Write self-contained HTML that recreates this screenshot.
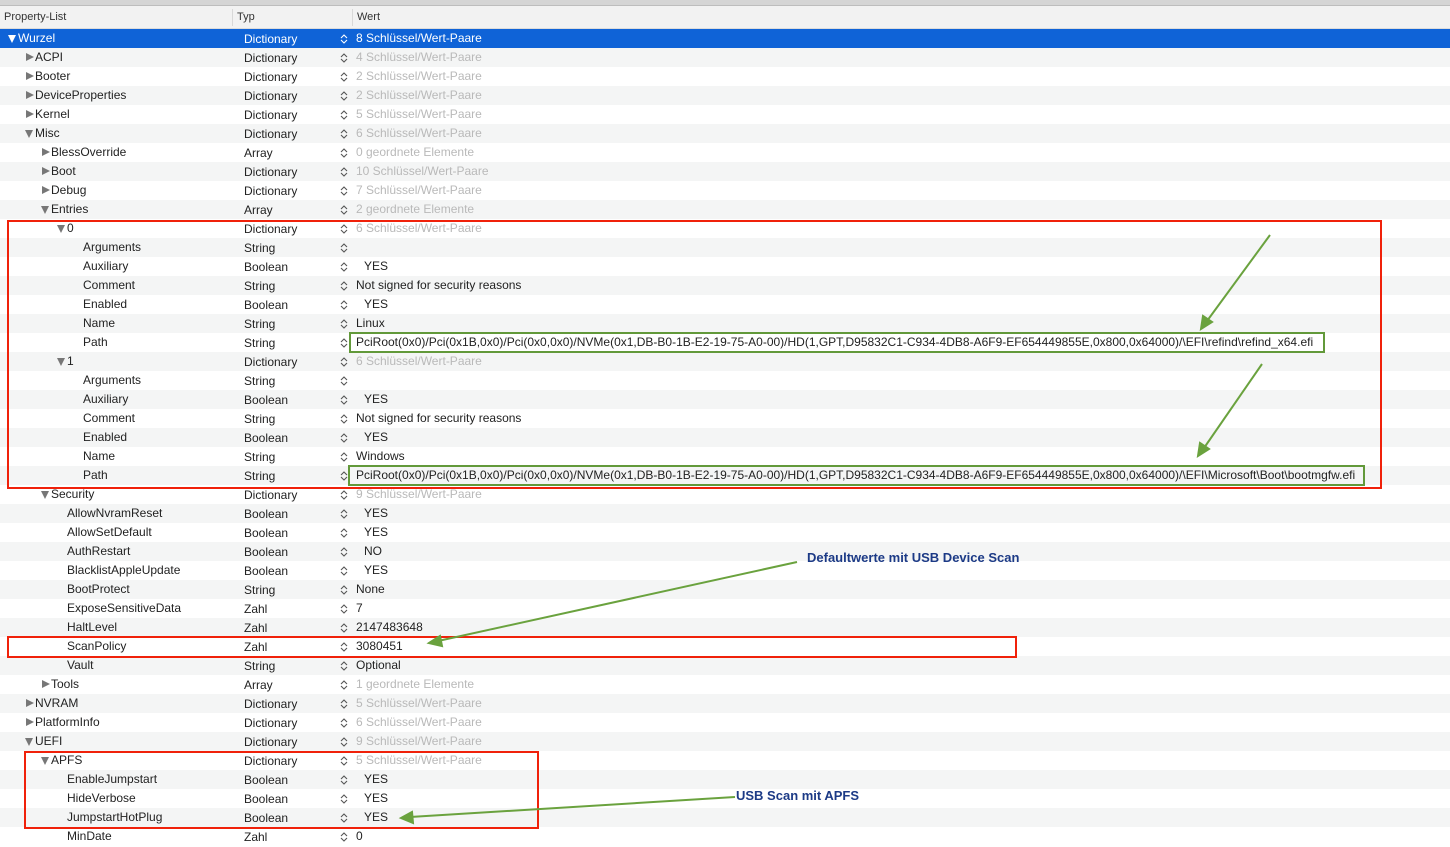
<!DOCTYPE html>
<html><head><meta charset="utf-8"><style>
*{margin:0;padding:0;box-sizing:border-box}
body{width:1450px;height:847px;overflow:hidden;background:#fff;font-family:"Liberation Sans",Arial,sans-serif;font-size:12px;color:#222;position:relative}
#top{position:absolute;left:0;top:0;width:1450px;height:6px;background:#d5d5d5;border-bottom:1px solid #bdbdbd}
#hdr{position:absolute;left:0;top:6px;width:1450px;height:23px;background:#f2f2f2;border-bottom:1px solid #dcdcdc;font-size:11px;color:#333}
#hdr span{position:absolute;top:5px}
#hdr i{position:absolute;top:3px;width:1px;height:17px;background:#d8d8d8}
#rows{position:absolute;left:0;top:29px;width:1450px}
.r{position:relative;height:19px;line-height:19px;white-space:nowrap}
.r:nth-child(even){background:#f4f5f5}
.r.sel{background:#0f63d7;color:#fff}
.n{position:absolute;top:0}
.t{position:absolute;left:244px;top:1px}
.s{position:absolute;left:340px;top:5px;width:8px;height:10px}
.v{position:absolute;left:356px;top:0}
.g{color:#b9b9b9}
.y{left:364px}
.tri{display:inline-block;width:10px;height:10px;position:relative;vertical-align:middle;top:-1px}
.tri.d::before{content:"";position:absolute;left:0;top:2px;border-left:4.5px solid transparent;border-right:4.5px solid transparent;border-top:8px solid #777}
.tri.rt::before{content:"";position:absolute;left:1px;top:1px;border-top:4.5px solid transparent;border-bottom:4.5px solid transparent;border-left:8px solid #777}
.sel .tri.d::before{border-top-color:#fff}
.box{position:absolute;border:2px solid #f0210a}
.gb{position:absolute;border:2px solid #62993a}
.lbl{position:absolute;color:#1c3a86;font-weight:bold;font-size:13px}
</style></head><body>
<div id="top"></div>
<div id="hdr"><span style="left:4px">Property-List</span><i style="left:232px"></i><span style="left:237px">Typ</span><i style="left:352px"></i><span style="left:357px">Wert</span></div>
<svg width="0" height="0" style="position:absolute"><defs><symbol id="st" viewBox="0 0 8 10"><path d="M1 4 L4 1 L7 4 M1 6 L4 9 L7 6" fill="none" stroke="currentColor" stroke-width="1.1"/></symbol></defs></svg>
<div id="rows">
<div class="r sel"><span class="n" style="left:8px"><span class="tri d"></span>Wurzel</span><span class="t">Dictionary</span><svg class="s" style="color:#fff"><use href="#st"/></svg><span class="v">8 Schlüssel/Wert-Paare</span></div>
<div class="r"><span class="n" style="left:25px"><span class="tri rt"></span>ACPI</span><span class="t">Dictionary</span><svg class="s" style="color:#555"><use href="#st"/></svg><span class="v g">4 Schlüssel/Wert-Paare</span></div>
<div class="r"><span class="n" style="left:25px"><span class="tri rt"></span>Booter</span><span class="t">Dictionary</span><svg class="s" style="color:#555"><use href="#st"/></svg><span class="v g">2 Schlüssel/Wert-Paare</span></div>
<div class="r"><span class="n" style="left:25px"><span class="tri rt"></span>DeviceProperties</span><span class="t">Dictionary</span><svg class="s" style="color:#555"><use href="#st"/></svg><span class="v g">2 Schlüssel/Wert-Paare</span></div>
<div class="r"><span class="n" style="left:25px"><span class="tri rt"></span>Kernel</span><span class="t">Dictionary</span><svg class="s" style="color:#555"><use href="#st"/></svg><span class="v g">5 Schlüssel/Wert-Paare</span></div>
<div class="r"><span class="n" style="left:25px"><span class="tri d"></span>Misc</span><span class="t">Dictionary</span><svg class="s" style="color:#555"><use href="#st"/></svg><span class="v g">6 Schlüssel/Wert-Paare</span></div>
<div class="r"><span class="n" style="left:41px"><span class="tri rt"></span>BlessOverride</span><span class="t">Array</span><svg class="s" style="color:#555"><use href="#st"/></svg><span class="v g">0 geordnete Elemente</span></div>
<div class="r"><span class="n" style="left:41px"><span class="tri rt"></span>Boot</span><span class="t">Dictionary</span><svg class="s" style="color:#555"><use href="#st"/></svg><span class="v g">10 Schlüssel/Wert-Paare</span></div>
<div class="r"><span class="n" style="left:41px"><span class="tri rt"></span>Debug</span><span class="t">Dictionary</span><svg class="s" style="color:#555"><use href="#st"/></svg><span class="v g">7 Schlüssel/Wert-Paare</span></div>
<div class="r"><span class="n" style="left:41px"><span class="tri d"></span>Entries</span><span class="t">Array</span><svg class="s" style="color:#555"><use href="#st"/></svg><span class="v g">2 geordnete Elemente</span></div>
<div class="r"><span class="n" style="left:57px"><span class="tri d"></span>0</span><span class="t">Dictionary</span><svg class="s" style="color:#555"><use href="#st"/></svg><span class="v g">6 Schlüssel/Wert-Paare</span></div>
<div class="r"><span class="n" style="left:83px">Arguments</span><span class="t">String</span><svg class="s" style="color:#555"><use href="#st"/></svg></div>
<div class="r"><span class="n" style="left:83px">Auxiliary</span><span class="t">Boolean</span><svg class="s" style="color:#555"><use href="#st"/></svg><span class="v y">YES</span></div>
<div class="r"><span class="n" style="left:83px">Comment</span><span class="t">String</span><svg class="s" style="color:#555"><use href="#st"/></svg><span class="v">Not signed for security reasons</span></div>
<div class="r"><span class="n" style="left:83px">Enabled</span><span class="t">Boolean</span><svg class="s" style="color:#555"><use href="#st"/></svg><span class="v y">YES</span></div>
<div class="r"><span class="n" style="left:83px">Name</span><span class="t">String</span><svg class="s" style="color:#555"><use href="#st"/></svg><span class="v">Linux</span></div>
<div class="r"><span class="n" style="left:83px">Path</span><span class="t">String</span><svg class="s" style="color:#555"><use href="#st"/></svg><span class="v">PciRoot(0x0)/Pci(0x1B,0x0)/Pci(0x0,0x0)/NVMe(0x1,DB-B0-1B-E2-19-75-A0-00)/HD(1,GPT,D95832C1-C934-4DB8-A6F9-EF654449855E,0x800,0x64000)/\EFI\refind\refind_x64.efi</span></div>
<div class="r"><span class="n" style="left:57px"><span class="tri d"></span>1</span><span class="t">Dictionary</span><svg class="s" style="color:#555"><use href="#st"/></svg><span class="v g">6 Schlüssel/Wert-Paare</span></div>
<div class="r"><span class="n" style="left:83px">Arguments</span><span class="t">String</span><svg class="s" style="color:#555"><use href="#st"/></svg></div>
<div class="r"><span class="n" style="left:83px">Auxiliary</span><span class="t">Boolean</span><svg class="s" style="color:#555"><use href="#st"/></svg><span class="v y">YES</span></div>
<div class="r"><span class="n" style="left:83px">Comment</span><span class="t">String</span><svg class="s" style="color:#555"><use href="#st"/></svg><span class="v">Not signed for security reasons</span></div>
<div class="r"><span class="n" style="left:83px">Enabled</span><span class="t">Boolean</span><svg class="s" style="color:#555"><use href="#st"/></svg><span class="v y">YES</span></div>
<div class="r"><span class="n" style="left:83px">Name</span><span class="t">String</span><svg class="s" style="color:#555"><use href="#st"/></svg><span class="v">Windows</span></div>
<div class="r"><span class="n" style="left:83px">Path</span><span class="t">String</span><svg class="s" style="color:#555"><use href="#st"/></svg><span class="v">PciRoot(0x0)/Pci(0x1B,0x0)/Pci(0x0,0x0)/NVMe(0x1,DB-B0-1B-E2-19-75-A0-00)/HD(1,GPT,D95832C1-C934-4DB8-A6F9-EF654449855E,0x800,0x64000)/\EFI\Microsoft\Boot\bootmgfw.efi</span></div>
<div class="r"><span class="n" style="left:41px"><span class="tri d"></span>Security</span><span class="t">Dictionary</span><svg class="s" style="color:#555"><use href="#st"/></svg><span class="v g">9 Schlüssel/Wert-Paare</span></div>
<div class="r"><span class="n" style="left:67px">AllowNvramReset</span><span class="t">Boolean</span><svg class="s" style="color:#555"><use href="#st"/></svg><span class="v y">YES</span></div>
<div class="r"><span class="n" style="left:67px">AllowSetDefault</span><span class="t">Boolean</span><svg class="s" style="color:#555"><use href="#st"/></svg><span class="v y">YES</span></div>
<div class="r"><span class="n" style="left:67px">AuthRestart</span><span class="t">Boolean</span><svg class="s" style="color:#555"><use href="#st"/></svg><span class="v y">NO</span></div>
<div class="r"><span class="n" style="left:67px">BlacklistAppleUpdate</span><span class="t">Boolean</span><svg class="s" style="color:#555"><use href="#st"/></svg><span class="v y">YES</span></div>
<div class="r"><span class="n" style="left:67px">BootProtect</span><span class="t">String</span><svg class="s" style="color:#555"><use href="#st"/></svg><span class="v">None</span></div>
<div class="r"><span class="n" style="left:67px">ExposeSensitiveData</span><span class="t">Zahl</span><svg class="s" style="color:#555"><use href="#st"/></svg><span class="v">7</span></div>
<div class="r"><span class="n" style="left:67px">HaltLevel</span><span class="t">Zahl</span><svg class="s" style="color:#555"><use href="#st"/></svg><span class="v">2147483648</span></div>
<div class="r"><span class="n" style="left:67px">ScanPolicy</span><span class="t">Zahl</span><svg class="s" style="color:#555"><use href="#st"/></svg><span class="v">3080451</span></div>
<div class="r"><span class="n" style="left:67px">Vault</span><span class="t">String</span><svg class="s" style="color:#555"><use href="#st"/></svg><span class="v">Optional</span></div>
<div class="r"><span class="n" style="left:41px"><span class="tri rt"></span>Tools</span><span class="t">Array</span><svg class="s" style="color:#555"><use href="#st"/></svg><span class="v g">1 geordnete Elemente</span></div>
<div class="r"><span class="n" style="left:25px"><span class="tri rt"></span>NVRAM</span><span class="t">Dictionary</span><svg class="s" style="color:#555"><use href="#st"/></svg><span class="v g">5 Schlüssel/Wert-Paare</span></div>
<div class="r"><span class="n" style="left:25px"><span class="tri rt"></span>PlatformInfo</span><span class="t">Dictionary</span><svg class="s" style="color:#555"><use href="#st"/></svg><span class="v g">6 Schlüssel/Wert-Paare</span></div>
<div class="r"><span class="n" style="left:25px"><span class="tri d"></span>UEFI</span><span class="t">Dictionary</span><svg class="s" style="color:#555"><use href="#st"/></svg><span class="v g">9 Schlüssel/Wert-Paare</span></div>
<div class="r"><span class="n" style="left:41px"><span class="tri d"></span>APFS</span><span class="t">Dictionary</span><svg class="s" style="color:#555"><use href="#st"/></svg><span class="v g">5 Schlüssel/Wert-Paare</span></div>
<div class="r"><span class="n" style="left:67px">EnableJumpstart</span><span class="t">Boolean</span><svg class="s" style="color:#555"><use href="#st"/></svg><span class="v y">YES</span></div>
<div class="r"><span class="n" style="left:67px">HideVerbose</span><span class="t">Boolean</span><svg class="s" style="color:#555"><use href="#st"/></svg><span class="v y">YES</span></div>
<div class="r"><span class="n" style="left:67px">JumpstartHotPlug</span><span class="t">Boolean</span><svg class="s" style="color:#555"><use href="#st"/></svg><span class="v y">YES</span></div>
<div class="r"><span class="n" style="left:67px">MinDate</span><span class="t">Zahl</span><svg class="s" style="color:#555"><use href="#st"/></svg><span class="v">0</span></div>
</div>

<div class="box" style="left:7px;top:220px;width:1375px;height:269px"></div>
<div class="box" style="left:7px;top:636px;width:1010px;height:22px"></div>
<div class="box" style="left:24px;top:751px;width:515px;height:78px"></div>
<div class="gb" style="left:349px;top:332px;width:976px;height:21px"></div>
<div class="gb" style="left:348px;top:465px;width:1017px;height:21px"></div>

<svg style="position:absolute;left:0;top:0" width="1450" height="847">
<g stroke="#6aa23e" stroke-width="2" fill="#6aa23e">
<line x1="1270" y1="235" x2="1207" y2="321"/><polygon points="1201,329 1203,316 1212,322"/>
<line x1="1262" y1="364" x2="1204" y2="448"/><polygon points="1198,456 1200,443 1209,449"/>
<line x1="797" y1="562" x2="438" y2="641"/><polygon points="429,643 440,636 442,646"/>
<line x1="735" y1="797" x2="410" y2="817"/><polygon points="401,818 412,812 413,823"/>
</g></svg>
<div class="lbl" style="left:807px;top:550px">Defaultwerte mit USB Device Scan</div>
<div class="lbl" style="left:736px;top:788px">USB Scan mit APFS</div>
</body></html>
